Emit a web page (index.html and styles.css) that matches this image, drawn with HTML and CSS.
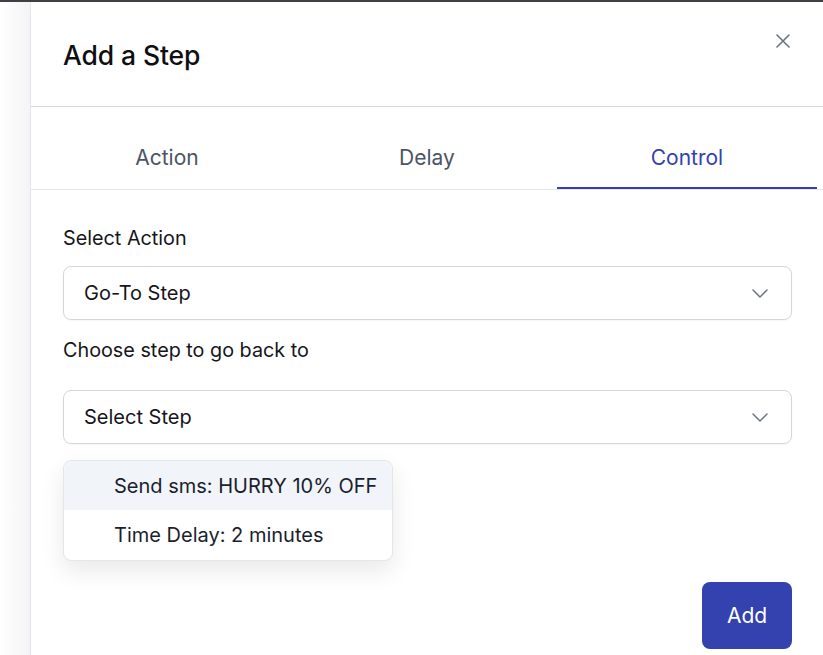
FILE: index.html
```html
<!DOCTYPE html>
<html lang="en">
<head>
<meta charset="utf-8">
<title>Add a Step</title>
<link rel="stylesheet" href="styles.css">
</head>
<body>
<div class="page">
  <div class="backdrop"></div>
  <aside class="panel">
    <header class="panel-header">
      <h1 class="panel-title">Add a Step</h1>
      <button class="close-btn" aria-label="Close">
        <svg width="14" height="14" viewBox="0 0 14 14"><path d="M1 1L13 13M13 1L1 13" stroke="#6b7280" stroke-width="1.6" stroke-linecap="round" fill="none"/></svg>
      </button>
    </header>
    <nav class="tabs">
      <div class="tab">Action</div>
      <div class="tab">Delay</div>
      <div class="tab tab-active">Control</div>
    </nav>
    <section class="form">
      <label class="field-label">Select Action</label>
      <div class="select">
        <span>Go-To Step</span>
        <svg class="chevron" width="16" height="9" viewBox="0 0 16 9"><path d="M1 1L8 8L15 1" stroke="#6b7280" stroke-width="1.5" fill="none" stroke-linecap="round" stroke-linejoin="round"/></svg>
      </div>
      <label class="field-label field-label-2">Choose step to go back to</label>
      <div class="select-wrap">
        <div class="select">
          <span>Select Step</span>
          <svg class="chevron" width="16" height="9" viewBox="0 0 16 9"><path d="M1 1L8 8L15 1" stroke="#6b7280" stroke-width="1.5" fill="none" stroke-linecap="round" stroke-linejoin="round"/></svg>
        </div>
        <ul class="menu">
          <li class="menu-item menu-item-hover">Send sms: HURRY 10% OFF</li>
          <li class="menu-item">Time Delay: 2 minutes</li>
        </ul>
      </div>
      <div class="footer">
        <button class="add-btn">Add</button>
      </div>
    </section>
  </aside>
</div>
</body>
</html>
```

FILE: styles.css
```css
* { box-sizing: border-box; }
html, body { margin: 0; padding: 0; }
body {
  background: #ffffff;
  font-family: "Inter", "Lato", "Liberation Sans", sans-serif;
  color: #111827;
  border-top: 2px solid #3f3f46;
  height: 655px;
  overflow: hidden;
}
.page {
  display: flex;
  height: 653px;
}
.backdrop {
  width: 30px;
  flex: none;
  background: linear-gradient(to right, #ffffff, #f4f4f6);
}
.panel {
  flex: 1;
  border-left: 1px solid #e3e6eb;
  display: flex;
  flex-direction: column;
  background: #fff;
}
.panel-header {
  height: 105px;
  display: flex;
  justify-content: space-between;
  align-items: flex-start;
  padding: 0 33px 0 32px;
  border-bottom: 1px solid #d8d9dd;
}
.panel-title {
  margin: 37px 0 0;
  font-size: 26.5px;
  font-weight: 500;
  line-height: 32px;
  color: #0f0f12;
  letter-spacing: -0.1px;
}
.close-btn {
  margin-top: 32px;
  padding: 0;
  border: 0;
  background: none;
  width: 14px;
  height: 14px;
  display: flex;
}
.tabs {
  display: flex;
  padding: 0 6px;
  border-bottom: 1px solid #e5e7eb;
}
.tab {
  flex: 1;
  text-align: center;
  font-size: 21px;
  line-height: 24px;
  padding: 39px 0 17px;
  color: #4b5565;
  border-bottom: 2px solid transparent;
}
.tab-active {
  color: #3341ae;
  border-bottom-color: #3341ae;
}
.form {
  padding: 36px 31px 0 32px;
  display: flex;
  flex-direction: column;
}
.field-label {
  font-size: 19.8px;
  line-height: 24px;
  color: #16161a;
  margin-bottom: 16px;
}
.field-label-2 {
  margin-top: 18px;
  margin-bottom: 28px;
}
.select {
  height: 54px;
  border: 1.5px solid #d3d6db;
  border-radius: 8px;
  display: flex;
  align-items: center;
  justify-content: space-between;
  padding: 0 23px 0 20px;
  font-size: 20px;
  color: #16161a;
  box-shadow: 0 1px 2px rgba(0,0,0,0.04);
}
.select-wrap {
  position: relative;
}
.menu {
  position: absolute;
  top: 70px;
  left: 0;
  width: 330px;
  margin: 0;
  padding: 0;
  list-style: none;
  background: #fff;
  border: 1px solid #e4e6ea;
  border-radius: 8px;
  box-shadow: 0 10px 24px rgba(0,0,0,0.09);
  overflow: hidden;
}
.menu-item {
  height: 50px;
  display: flex;
  align-items: center;
  padding-left: 50px;
  font-size: 20px;
  color: #1b1e2e;
}
.menu-item-hover {
  background: #f1f4f9;
  height: 49px;
}
.footer {
  display: flex;
  justify-content: flex-end;
  margin-top: 138px;
}
.add-btn {
  width: 90px;
  height: 67px;
  border: 0;
  border-radius: 8px;
  background: #3342ae;
  color: #fff;
  font-family: inherit;
  font-size: 21px;
}
```
